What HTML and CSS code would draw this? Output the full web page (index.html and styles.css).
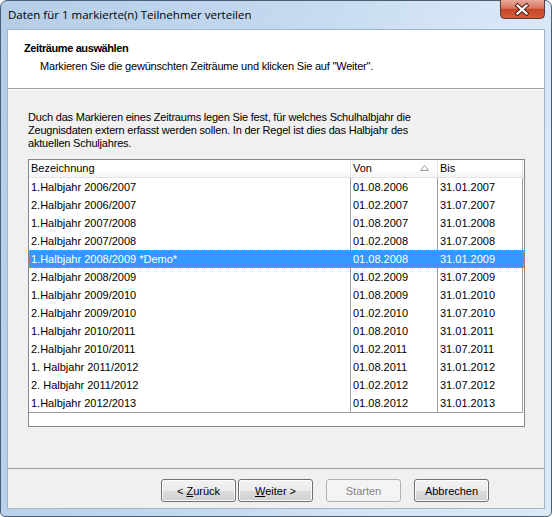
FILE: index.html
```html
<!DOCTYPE html>
<html lang="de">
<head>
<meta charset="utf-8">
<title>Daten verteilen</title>
<link rel="stylesheet" href="styles.css">
</head>
<body>
<div class="window">
  <div class="titlebar">
    <span class="title">Daten für 1 markierte(n) Teilnehmer verteilen</span>
    <div class="close">
      <svg width="45" height="19" viewBox="0 0 45 19">
        <defs>
          <linearGradient id="cg" x1="0" y1="0" x2="0" y2="1">
            <stop offset="0" stop-color="#e9a99b"/>
            <stop offset="0.45" stop-color="#d8755f"/>
            <stop offset="0.5" stop-color="#c8462a"/>
            <stop offset="1" stop-color="#d0603c"/>
          </linearGradient>
        </defs>
        <path d="M0.5 0 V14.5 Q0.5 18.5 4.5 18.5 H40.5 Q44.5 18.5 44.5 14.5 V0" fill="url(#cg)" stroke="#5b3a3a" stroke-width="1"/>
        <path d="M17.5 5.5 L26.5 13.5 M26.5 5.5 L17.5 13.5" stroke="#4a2520" stroke-width="4.2" stroke-linecap="square"/>
        <path d="M17.5 5.5 L26.5 13.5 M26.5 5.5 L17.5 13.5" stroke="#ffffff" stroke-width="2.2" stroke-linecap="square"/>
      </svg>
    </div>
  </div>
  <div class="client">
    <div class="header">
      <div class="h-title">Zeiträume auswählen</div>
      <div class="h-sub">Markieren Sie die gewünschten Zeiträume und klicken Sie auf "Weiter".</div>
    </div>
    <div class="content">
      <p class="desc">Duch das Markieren eines Zeitraums legen Sie fest, für welches Schulhalbjahr die<br>Zeugnisdaten extern erfasst werden sollen. In der Regel ist dies das Halbjahr des<br>aktuellen Schuljahres.</p>
      <div class="list">
        <div class="row head">
          <div class="cell">Bezeichnung</div>
          <div class="cell von">Von<svg class="sort" width="9" height="6" viewBox="0 0 9 6"><path d="M0.5 5.5 L4.5 0.5 L8.5 5.5 Z" fill="none" stroke="#9a9a9a" stroke-width="1"/></svg></div>
          <div class="cell">Bis</div>
        </div>
        <div class="row"><div class="cell">1.Halbjahr 2006/2007</div><div class="cell">01.08.2006</div><div class="cell">31.01.2007</div></div>
        <div class="row"><div class="cell">2.Halbjahr 2006/2007</div><div class="cell">01.02.2007</div><div class="cell">31.07.2007</div></div>
        <div class="row"><div class="cell">1.Halbjahr 2007/2008</div><div class="cell">01.08.2007</div><div class="cell">31.01.2008</div></div>
        <div class="row"><div class="cell">2.Halbjahr 2007/2008</div><div class="cell">01.02.2008</div><div class="cell">31.07.2008</div></div>
        <div class="row selected"><div class="cell">1.Halbjahr 2008/2009 *Demo*</div><div class="cell">01.08.2008</div><div class="cell">31.01.2009</div></div>
        <div class="row"><div class="cell">2.Halbjahr 2008/2009</div><div class="cell">01.02.2009</div><div class="cell">31.07.2009</div></div>
        <div class="row"><div class="cell">1.Halbjahr 2009/2010</div><div class="cell">01.08.2009</div><div class="cell">31.01.2010</div></div>
        <div class="row"><div class="cell">2.Halbjahr 2009/2010</div><div class="cell">01.02.2010</div><div class="cell">31.07.2010</div></div>
        <div class="row"><div class="cell">1.Halbjahr 2010/2011</div><div class="cell">01.08.2010</div><div class="cell">31.01.2011</div></div>
        <div class="row"><div class="cell">2.Halbjahr 2010/2011</div><div class="cell">01.02.2011</div><div class="cell">31.07.2011</div></div>
        <div class="row"><div class="cell">1. Halbjahr 2011/2012</div><div class="cell">01.08.2011</div><div class="cell">31.01.2012</div></div>
        <div class="row"><div class="cell">2. Halbjahr 2011/2012</div><div class="cell">01.02.2012</div><div class="cell">31.07.2012</div></div>
        <div class="row last"><div class="cell">1.Halbjahr 2012/2013</div><div class="cell">01.08.2012</div><div class="cell">31.01.2013</div></div>
      </div>
    </div>
    <div class="footer">
      <button class="btn"><span>&lt; <u>Z</u>urück</span></button>
      <button class="btn"><span><u>W</u>eiter &gt;</span></button>
      <button class="btn disabled gap"><span>Starten</span></button>
      <button class="btn gap"><span>Abbrechen</span></button>
    </div>
  </div>
</div>
</body>
</html>
```

FILE: styles.css
```css
html, body {
  margin: 0;
  padding: 0;
  background: #ffffff;
}

.window {
  width: 552px;
  height: 517px;
  box-sizing: border-box;
  border: 1px solid #4d5e73;
  border-radius: 7px 7px 5px 5px;
  background: linear-gradient(100deg, #b5cde8 0%, #c3d9f0 45%, #d6e6f6 75%, #dce9f7 100%);
  padding: 0 6px 7px 6px;
  display: flex;
  flex-direction: column;
  font-family: "Liberation Sans", Arial, sans-serif;
  font-size: 11px;
  color: #000;
}

.titlebar {
  height: 28px;
  display: flex;
  align-items: flex-start;
  justify-content: space-between;
}

.title {
  font-family: "Open Sans", "Noto Sans", sans-serif;
  font-size: 11.5px;
  line-height: 28px;
  padding-left: 1px;
  color: #000;
  white-space: nowrap;
}

.close {
  width: 45px;
  height: 19px;
  margin-top: -1px;
}

.close svg {
  display: block;
}

.client {
  flex: 1;
  border: 1px solid #a2b4c9;
  background: #f0f0f0;
  display: flex;
  flex-direction: column;
}

.header {
  background: #ffffff;
  border-bottom: 1px solid #a0a0a0;
  padding: 12px 0 0 16px;
  height: 46px;
}

.h-title {
  font-weight: bold;
  line-height: 13px;
  letter-spacing: -0.4px;
}

.h-sub {
  line-height: 13px;
  margin-top: 5px;
  padding-left: 16px;
  letter-spacing: -0.2px;
}

.content {
  flex: 1;
  padding: 21px 19px 0 20px;
  border-top: 1px solid #ffffff;
}

.desc {
  margin: 0;
  line-height: 13px;
  white-space: nowrap;
  letter-spacing: -0.2px;
}

.list {
  margin-top: 9px;
  width: 497px;
  height: 268px;
  box-sizing: border-box;
  border: 1px solid #828790;
  background: #ffffff;
}

.row {
  display: grid;
  grid-template-columns: 322px 87px 85px;
  height: 18px;
}

.row .cell {
  border-right: 1px solid #a0a0a0;
  padding-left: 2px;
  line-height: 18px;
  white-space: nowrap;
  overflow: hidden;
}

.row.last {
  border-bottom: 1px solid #a0a0a0;
  width: 494px;
}

.row.head {
  height: 18px;
  background: linear-gradient(#ffffff, #ffffff 60%, #f3f4f6);
  border-bottom: 1px solid #e5e5e5;
  box-sizing: border-box;
}

.row.head .cell {
  border-right: 1px solid #e3e5e8;
  line-height: 17px;
  padding-left: 2px;
}

.row.head .von {
  display: flex;
  justify-content: space-between;
  align-items: center;
  padding-right: 8px;
}

.sort {
  display: block;
  margin-top: -1px;
}

.row.selected {
  background: #3399ff;
  color: #ffffff;
  outline: 1px dotted #e8862a;
  outline-offset: -1px;
}

.row.selected .cell {
  border-right-color: #3399ff;
}

.footer {
  border-top: 1px solid #a0a0a0;
  display: flex;
  justify-content: flex-end;
  align-items: flex-start;
  padding: 10px 55px 0 0;
  height: 29px;
  gap: 2px;
}

.btn {
  width: 75px;
  height: 23px;
  margin: 0;
  padding: 0;
  border: 1px solid #707070;
  border-radius: 3px;
  background: linear-gradient(#f2f2f2 0%, #ebebeb 50%, #dddddd 51%, #cfcfcf 100%);
  box-shadow: inset 0 0 0 1px #fcfcfc;
  font-family: "Liberation Sans", Arial, sans-serif;
  font-size: 11px;
  color: #000;
}

.btn.gap {
  margin-left: 11px;
}

.btn.disabled {
  border-color: #adb2b5;
  background: #f4f4f4;
  box-shadow: none;
  color: #838383;
}
```
